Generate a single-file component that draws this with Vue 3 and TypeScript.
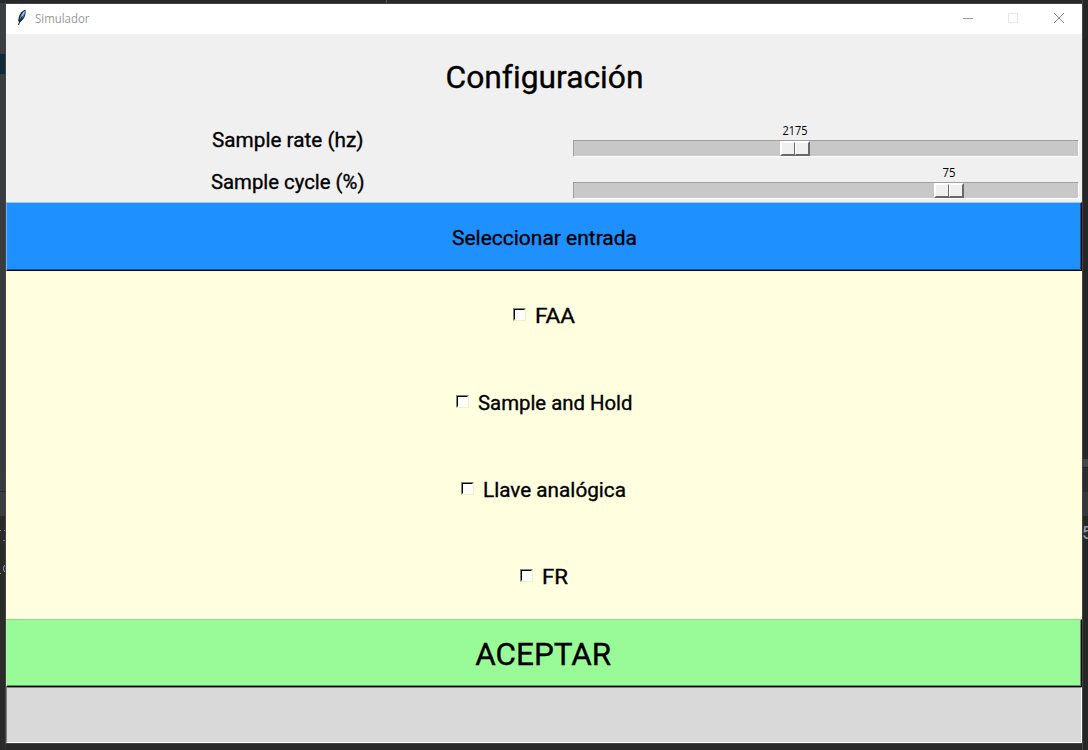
<script setup lang="ts">
interface Option { label: string; width: number; textWidth: number }
interface Scale { label: string; labelWidth: number; value: number; valueWidth: number; offset: number }

const scales: Scale[] = [
  { label: 'Sample rate (hz)', labelWidth: 152, value: 2175, valueWidth: 25, offset: 207 },
  { label: 'Sample cycle (%)', labelWidth: 154, value: 75, valueWidth: 13, offset: 361 },
]

const options: Option[] = [
  { label: 'FAA', width: 40, textWidth: 40 },
  { label: 'Sample and Hold', width: 154, textWidth: 154.5 },
  { label: 'Llave analógica', width: 144, textWidth: 143 },
  { label: 'FR', width: 26, textWidth: 26 },
]
</script>

<template>
  <div class="desktop">
    <div class="edge left">
      <div class="l1"></div><div class="l2"></div><div class="l3"></div><div class="l4"></div>
      <div class="l5">
        <svg width="6" height="232">
          <path d="M0 14.5H1M0 57.5H1" stroke="#a98f4c" />
          <path d="M4 14.5H6M3 24.5H6M5.5 14V17" stroke="#6d84a5" />
          <path d="M6 48.5Q3.5 49 3.5 52.5T6 56.5" stroke="#8baac5" fill="none" />
        </svg>
      </div>
    </div>

    <div class="window">
      <header class="titlebar">
        <svg class="feather" width="12" height="18" viewBox="0 0 12 18">
          <path d="M9.500 .800C5 2 2.500 6.500 2.200 12L3.500 13.500C7.500 11 10.300 7 9.500 .800Z" fill="#15263c" />
          <path d="M8.800 1.800C5.500 4 3.800 7.500 3.600 11.500C7 9.500 9.300 6.500 8.800 1.800Z" fill="#4d94df" />
          <path d="M7 6L3.500 13L2.500 16" stroke="#111" fill="none" />
          <path d="M8.300 2.500L6 7.500" stroke="#b4d6f8" fill="none" />
        </svg>
        <svg class="caption" width="60" height="20">
          <text x="0" y="15" textLength="54.500" lengthAdjust="spacingAndGlyphs">Simulador</text>
        </svg>
        <svg class="controls" width="120" height="30" shape-rendering="crispEdges">
          <path d="M1 14.500H11" stroke="#999" />
          <rect x="46.500" y="9.500" width="9" height="9" fill="none" stroke="#e7e7e7" />
          <path d="M92 9L102 19M102 9L92 19" stroke="#888" shape-rendering="auto" />
        </svg>
      </header>

      <section class="config">
        <h1>
          <svg width="196" height="50">
            <text class="large" x="-.5" y="38" textLength="198" lengthAdjust="spacingAndGlyphs">Configuración</text>
          </svg>
        </h1>
        <div v-for="s in scales" :key="s.label" class="row">
          <div class="label">
            <svg :width="s.labelWidth" height="34">
              <text class="medium" x="0" y="26" :textLength="s.labelWidth - .5" lengthAdjust="spacingAndGlyphs">{{ s.label }}</text>
            </svg>
          </div>
          <div class="scale">
            <div class="value" :style="{ marginLeft: s.offset + 'px' }">
              <svg :width="s.valueWidth" height="19">
                <text class="small" x="-.5" y="14" :textLength="s.valueWidth" lengthAdjust="spacingAndGlyphs">{{ s.value }}</text>
              </svg>
            </div>
            <div class="trough">
              <div class="thumb" :style="{ marginLeft: s.offset - 1 + 'px' }"><i></i><i></i></div>
            </div>
          </div>
        </div>
      </section>

      <button class="bar select">
        <svg width="185" height="66">
          <text class="medium" x="0" y="42" textLength="185" lengthAdjust="spacingAndGlyphs">Seleccionar entrada</text>
        </svg>
      </button>

      <section class="options">
        <label v-for="o in options" :key="o.label">
          <span class="box"><i></i></span>
          <svg :width="o.width" height="87">
            <text class="medium" x="0" y="52" :textLength="o.textWidth" lengthAdjust="spacingAndGlyphs">{{ o.label }}</text>
          </svg>
        </label>
      </section>

      <button class="bar accept">
        <svg width="136" height="65">
          <text class="large" x="-.8" y="45" textLength="136" lengthAdjust="spacingAndGlyphs">ACEPTAR</text>
        </svg>
      </button>
      <div class="status"></div>
    </div>

    <div class="edge right">
      <div class="r1"></div><div class="r2"></div><div class="r3"></div><div class="r4"></div>
      <div class="r5"><span>5</span></div>
    </div>
    <div class="tick"></div>
  </div>
</template>

<style>
body { margin: 0; overflow: hidden; }
</style>

<style scoped>
* { box-sizing: border-box; }
svg { display: block; flex: none; overflow: visible; }
.desktop { position: relative; width: 1088px; height: 750px; display: flex; background: #292929; overflow: hidden; }
.edge { height: 750px; overflow: hidden; flex: none; }
.left { width: 6px; border-right: 1px solid #303132; padding-top: 3px; }
.l1 { height: 51px; background: #3c3f41; }
.l2 { height: 20px; background: #0d293e; }
.l3 { height: 417px; background: #393c3e; }
.l4 { height: 25px; background: #3a3e41; border-top: 1px solid #2b2b2b; }
.l5 { height: 232px; background: #2a2a2a; }
.right { width: 6px; border-left: 1px solid #444; }
.r1 { height: 459px; background: #262626; }
.r2 { height: 8px; background: #464646; }
.r3 { height: 25px; background: #2b2d30; border-top: 1px solid #222; }
.r4 { height: 24px; background: #35373a; }
.r5 { height: 234px; background: #262626; }
.r5 span { display: block; font: 20px/36px "Liberation Mono", monospace; color: #8d99a5; margin-left: -1px; }
.tick { position: absolute; left: 386px; top: 0; width: 1px; height: 3px; background: #555; }

.window { width: 1076px; height: 739px; margin-top: 4px; display: flex; flex-direction: column; background: #f0f0f0; box-shadow: 0 0 0 1px #444; }
.titlebar { height: 30px; flex: none; background: #fff; display: flex; padding-left: 10px; }
.feather { margin-top: 5px; }
.caption { margin: 4px 0 0 7px; }
.caption text { font: 12px "Open Sans", "Noto Sans", sans-serif; fill: #999; }
.controls { margin-left: auto; }

.large, .medium { font-family: Roboto, "Liberation Sans", sans-serif; font-weight: 400; font-variant-ligatures: none; fill: #000; stroke: #000; stroke-width: .35px; }
.large { font-size: 32px; }
.medium { font-size: 21px; }
.small { font: 12px "Open Sans", "Noto Sans", sans-serif; fill: #000; }

.config { height: 168px; flex: none; background: #f0f0f0; }
h1 { margin: 0; height: 84px; display: flex; justify-content: center; padding-top: 16px; }
.row { height: 42px; display: flex; }
.label { width: 564px; display: flex; justify-content: center; padding-top: 3px; }
.scale { width: 509px; padding: 3px 0 0 3px; }
.value { width: 30px; height: 19px; display: flex; justify-content: center; }
.trough { height: 17px; width: 506px; background: #c8c8c8; border: 1px solid; border-color: #a0a0a0 #fff #fff #a0a0a0; }
.thumb { width: 30px; height: 15px; display: flex; background: #f0f0f0; border: 1px solid; border-color: #fff #696969 #696969 #fff; }
.thumb i { flex: 1; border: 1px solid; border-color: #fff #696969 #696969 #fff; }

.bar { display: flex; justify-content: center; width: 1076px; flex: none; margin: 0; padding: 0; border: 1px solid; border-radius: 0; }
.select { height: 69px; background: #1e90ff; border-color: #9bcaf5 #000 #000 #70b4f5; box-shadow: inset -1px -1px #125699; }
.accept { height: 68px; background: #98fb98; border-color: #8ddb8d #000 #000 #aaf6aa; box-shadow: inset -1px -1px #5b975b; }
.options { height: 348px; flex: none; background: #ffffe0; }
.options label { height: 87px; display: flex; justify-content: center; }
.box { width: 13px; height: 13px; margin: 37px 9px 0 0; border: 1px solid; border-color: #858575 #f0f0d0 #f0f0d0 #858575; background: #fff; }
.box i { display: block; width: 11px; height: 11px; border: 1px solid; border-color: #000 #fffff0 #fffff0 #000; }
.status { height: 56px; flex: none; background: #d9d9d9; border: 1px solid; border-color: #828282 #fff #fff #828282; }
</style>
